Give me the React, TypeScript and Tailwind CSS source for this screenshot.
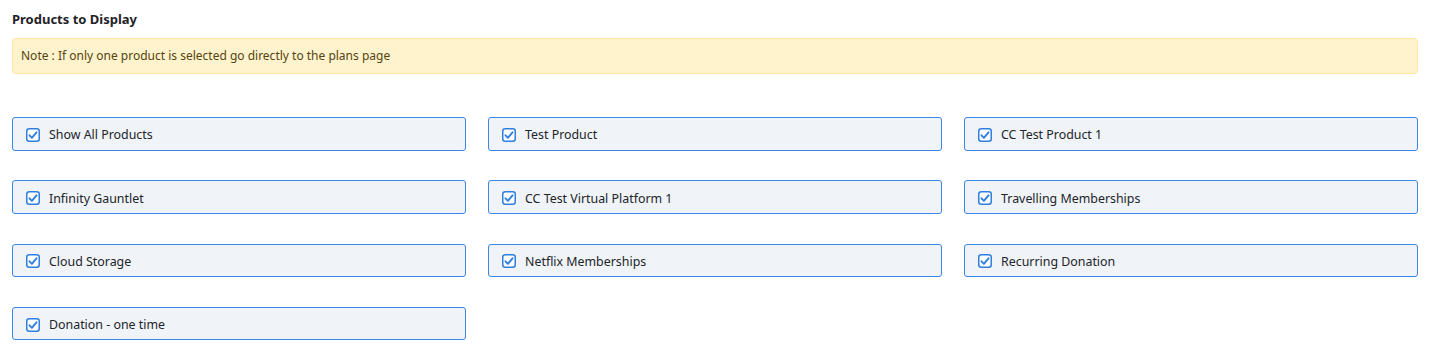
const products = [
  'Show All Products',
  'Test Product',
  'CC Test Product 1',
  'Infinity Gauntlet',
  'CC Test Virtual Platform 1',
  'Travelling Memberships',
  'Cloud Storage',
  'Netflix Memberships',
  'Recurring Donation',
  'Donation - one time',
];

const CheckIcon = () => (
  <svg width="14" height="14" viewBox="0 0 14 14" className="shrink-0">
    <rect x="0.75" y="0.75" width="12.5" height="12.5" rx="2.5" fill="#fff" stroke="#2f7fe0" strokeWidth="1.5" />
    <path d="M3.5 7.3 L5.9 9.8 L10.5 4.3" fill="none" stroke="#2f7fe0" strokeWidth="1.9" strokeLinecap="round" strokeLinejoin="round" />
  </svg>
);

export default function App() {
  return (
    <div className="bg-white w-[1431px] h-[346px] pl-3 pr-[13px] pt-[10px] font-['Noto_Sans',sans-serif] text-[#212529]">
      <h3 className="text-[13px] font-bold leading-[18px] text-[#1f2328]">Products to Display</h3>
      <div className="mt-[10px] h-[36px] flex items-center px-2 rounded-[4px] border border-[#ffe8a1] bg-[#fff3cd] text-[12px] text-[#54440f]">
        Note : If only one product is selected go directly to the plans page
      </div>
      <div className="mt-[43px] grid grid-cols-3 gap-x-[22px] gap-y-[29.8px]">
        {products.map((name) => (
          <label
            key={name}
            className="h-[33.5px] flex items-center gap-[9px] pl-[13px] pt-[2px] rounded-[3px] border border-[#3a87e8] bg-[#f0f3f8] text-[12.4px]"
          >
            <CheckIcon />
            <span className="mt-[2px]">{name}</span>
          </label>
        ))}
      </div>
    </div>
  );
}
